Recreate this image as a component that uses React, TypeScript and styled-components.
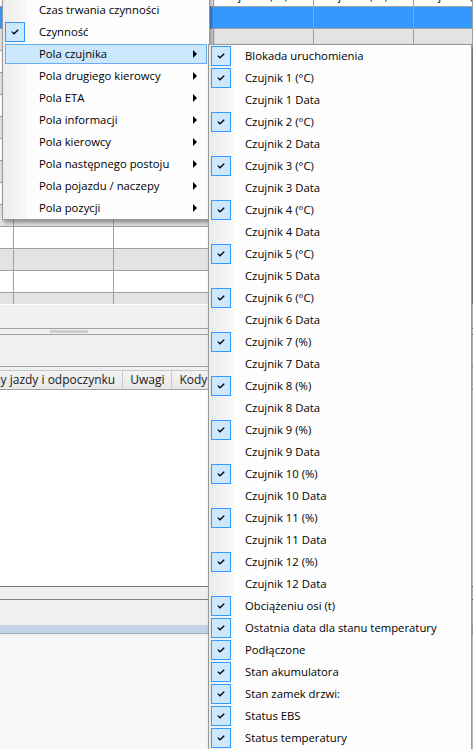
import React from "react";
import styled, { createGlobalStyle, css } from "styled-components";

const GlobalStyle = createGlobalStyle`
  html, body {
    margin: 0;
    padding: 0;
    width: 473px;
    height: 749px;
    overflow: hidden;
    background: #f0f0f0;
  }
  body {
    font-family: "Segoe UI", "Open Sans", sans-serif;
    font-size: 11.3px;
    color: #000;
  }
`;

const Window = styled.div`
  position: relative;
  width: 473px;
  height: 749px;
  overflow: hidden;
  display: flex;
  flex-direction: column;
  background: #f0f0f0;
`;

/* ---------- data grid behind the menus ---------- */

const GridArea = styled.div`
  flex-shrink: 0;
  height: 305px;
  overflow: hidden;
  box-sizing: border-box;
  border-bottom: 1px solid #ffffff;
`;

const GridInner = styled.div`
  margin-top: -15px;
`;

type RowKind = "header" | "selected" | "odd" | "even";

const rowBg: Record<RowKind, string> = {
  header: "#ffffff",
  selected: "#3399ff",
  odd: "#e3e3e3",
  even: "#ffffff",
};

const Row = styled.div<{ $kind: RowKind }>`
  display: grid;
  grid-template-columns: 14px repeat(4, 100px) 1fr;
  height: 22px;
  background: ${(p) => rowBg[p.$kind]};
`;

const Cell = styled.div`
  box-sizing: border-box;
  border-right: 1px solid #a0a0a0;
  border-bottom: 1px solid #a0a0a0;
  padding: 0 5px;
  line-height: 21px;
  white-space: nowrap;
  overflow: hidden;
`;

/* ---------- panels under the grid ---------- */

const TopPanel = styled.div`
  flex-shrink: 0;
  height: 24px;
  box-sizing: border-box;
  border-bottom: 1px solid #a0a0a0;
`;

const Splitter = styled.div`
  flex-shrink: 0;
  height: 6px;
  box-sizing: border-box;
  border-bottom: 1px solid #a0a0a0;
  padding: 1px 0 0 50px;
`;

const Grip = styled.div`
  width: 38px;
  height: 3px;
  background: #cdcdcd;
`;

const MiddlePanel = styled.div`
  flex-shrink: 0;
  height: 32px;
  box-sizing: border-box;
  border-bottom: 1px solid #a0a0a0;
`;

const TabStrip = styled.div`
  flex-shrink: 0;
  display: flex;
  align-items: flex-end;
  height: 23px;
  box-sizing: border-box;
  padding-top: 3px;
  border-bottom: 1px solid #a3a3a3;
  margin-left: -33px;
`;

const Tab = styled.div`
  height: 19px;
  box-sizing: border-box;
  padding: 0 7px;
  border: 1px solid #c9c9c9;
  border-bottom: none;
  margin-right: -1px;
  background: linear-gradient(#f2f2f2, #e8e8e8);
  font-size: 12px;
  line-height: 18px;
  white-space: nowrap;
  color: #1a1a1a;
`;

const TabBody = styled.div`
  flex-shrink: 0;
  height: 197px;
  box-sizing: border-box;
  background: #ffffff;
  border-bottom: 1px solid #7a7a7a;
`;

const StatusPanel = styled.div<{ $h: number; $line?: string }>`
  flex-shrink: 0;
  height: ${(p) => p.$h}px;
  box-sizing: border-box;
  ${(p) =>
    p.$line &&
    css`
      border-bottom: 1px solid ${p.$line};
    `}
`;

const BlueBar = styled.div`
  flex-shrink: 0;
  height: 9px;
  box-sizing: border-box;
  background: #c1d3e4;
  border-bottom: 1px solid #a4adb6;
`;

const BottomArea = styled.div`
  flex: 1;
  background: linear-gradient(#f0f0f0, #f8f8f8 4px);
`;

/* ---------- context menus ---------- */

const MenuPanel = styled.div`
  position: absolute;
  box-sizing: border-box;
  border: 1px solid #979797;
  background: linear-gradient(
    to right,
    #ececec 0px,
    #f8f8f8 24px,
    #fdfdfd 24px,
    #fdfdfd 100%
  );
  box-shadow: 2px 3px 4px rgba(0, 0, 0, 0.35);
`;

const MainMenu = styled(MenuPanel)`
  top: -24px;
  left: 2px;
  width: 208px;
  z-index: 1;
`;

const SubMenu = styled(MenuPanel)`
  top: 44px;
  left: 208px;
  width: 264px;
  z-index: 2;
`;

const MenuItem = styled.div`
  height: 22px;
  box-sizing: border-box;
  padding: 1px 2px;
`;

const ItemBox = styled.div<{ $active?: boolean }>`
  display: flex;
  align-items: center;
  height: 20px;
  ${(p) =>
    p.$active &&
    css`
      background: #cce8ff;
      box-shadow: inset 0 0 0 1px #6aaef0;
    `}
`;

const CheckBox = styled.div<{ $on?: boolean }>`
  flex-shrink: 0;
  width: 20px;
  height: 20px;
  box-sizing: border-box;
  display: flex;
  align-items: center;
  justify-content: center;
  ${(p) =>
    p.$on &&
    css`
      background: #cce8ff;
      border: 1px solid #3399ff;
    `}
`;

const Label = styled.span`
  flex: 1;
  padding-left: 14px;
  white-space: nowrap;
  line-height: 20px;
`;

const Arrow = styled.span`
  width: 0;
  height: 0;
  margin-right: 10px;
  border-left: 4px solid #000;
  border-top: 4px solid transparent;
  border-bottom: 4px solid transparent;
`;

const Check = () => (
  <svg width="8" height="6" viewBox="0 0 8 6">
    <polyline
      points="0.8,2.6 3,4.8 7.2,0.8"
      fill="none"
      stroke="#000"
      strokeWidth="1.3"
    />
  </svg>
);

type Item = { label: string; checked?: boolean; sub?: boolean; active?: boolean };

const mainItems: Item[] = [
  { label: "Adres" },
  { label: "Czas trwania czynności" },
  { label: "Czynność", checked: true },
  { label: "Pola czujnika", sub: true, active: true },
  { label: "Pola drugiego kierowcy", sub: true },
  { label: "Pola ETA", sub: true },
  { label: "Pola informacji", sub: true },
  { label: "Pola kierowcy", sub: true },
  { label: "Pola następnego postoju", sub: true },
  { label: "Pola pojazdu / naczepy", sub: true },
  { label: "Pola pozycji", sub: true },
];

const sensorItems: Item[] = [{ label: "Blokada uruchomienia", checked: true }];
for (let i = 1; i <= 12; i++) {
  const unit = i <= 6 ? "°C" : "%";
  sensorItems.push({ label: `Czujnik ${i} (${unit})`, checked: true });
  sensorItems.push({ label: `Czujnik ${i} Data` });
}
[
  "Obciążeniu osi (t)",
  "Ostatnia data dla stanu temperatury",
  "Podłączone",
  "Stan akumulatora",
  "Stan zamek drzwi:",
  "Status EBS",
  "Status temperatury",
].forEach((label) => sensorItems.push({ label, checked: true }));

const headers = ["", "", "Data", "Czujnik 1 (°C)", "Czujnik 2 (°C)", "Czujnik 3 (°C)"];

const MenuList = ({ items }: { items: Item[] }) => (
  <>
    {items.map((it) => (
      <MenuItem key={it.label}>
        <ItemBox $active={it.active}>
          <CheckBox $on={it.checked}>{it.checked && <Check />}</CheckBox>
          <Label>{it.label}</Label>
          {it.sub && <Arrow />}
        </ItemBox>
      </MenuItem>
    ))}
  </>
);

export default function App() {
  const rows: RowKind[] = [];
  for (let i = 0; i < 14; i++) rows.push(i === 0 ? "selected" : i % 2 ? "odd" : "even");

  return (
    <Window>
      <GlobalStyle />
      <GridArea>
        <GridInner>
          <Row $kind="header">
            {headers.map((h, i) => (
              <Cell key={i}>{h}</Cell>
            ))}
          </Row>
          {rows.map((kind, r) => (
            <Row key={r} $kind={kind}>
              {headers.map((_, i) => (
                <Cell key={i} />
              ))}
            </Row>
          ))}
        </GridInner>
      </GridArea>
      <TopPanel />
      <Splitter>
        <Grip />
      </Splitter>
      <MiddlePanel />
      <TabStrip>
        <Tab>Czasy jazdy i odpoczynku</Tab>
        <Tab>Uwagi</Tab>
        <Tab>Kody czynności</Tab>
      </TabStrip>
      <TabBody />
      <StatusPanel $h={13} $line="#7f7f7f" />
      <StatusPanel $h={25} />
      <BlueBar />
      <BottomArea />

      <MainMenu>
        <MenuList items={mainItems} />
      </MainMenu>
      <SubMenu>
        <MenuList items={sensorItems} />
      </SubMenu>
    </Window>
  );
}
